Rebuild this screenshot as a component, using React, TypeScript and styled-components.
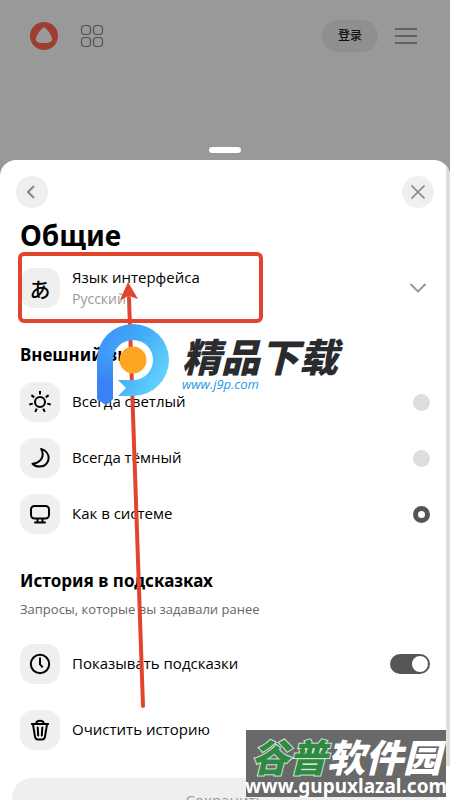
import React from "react";
import styled, { createGlobalStyle, css } from "styled-components";

const Global = createGlobalStyle`
  * { box-sizing: border-box; }
  body { margin: 0; background: #999; }
  body, button, input { font-family: "Open Sans", "Noto Sans", "Noto Sans CJK SC", sans-serif; color: #000; }
  h1, h2, p { margin: 0; padding: 0; }
`;

const Page = styled.div`
  position: relative;
  display: flex;
  flex-direction: column;
  height: 100vh;
  overflow: hidden;
  background: #999;
`;

const TopBar = styled.header`
  display: flex;
  align-items: center;
  gap: 20px;
  padding: 18px 30px 0;
  height: 54px;
`;

const IconLink = styled.a`
  display: flex;
`;

const PlainButton = styled.button`
  display: flex;
  padding: 0;
  border: 0;
  background: none;
  color: #505050;
  cursor: pointer;
`;

const Login = styled.a`
  margin-left: auto;
  margin-right: -6px;
  padding: 0 16px;
  border-radius: 16px;
  background: #8f8f8f;
  color: #111;
  font-size: 12px;
  font-weight: 500;
  line-height: 32px;
  height: 32px;
  text-decoration: none;
`;

const Handle = styled.div`
  align-self: center;
  width: 32px;
  height: 6px;
  margin: 93px 0 7px;
  border-radius: 3px;
  background: #fff;
`;

const Sheet = styled.main`
  flex: 1;
  min-height: 0;
  position: relative;
  overflow: hidden;
  padding: 16px 20px 0;
  border-radius: 16px 16px 0 0;
  background: #fff;
`;

const SheetNav = styled.nav`
  display: flex;
  justify-content: space-between;
  margin: 0 -4px;
`;

const RoundButton = styled.button`
  display: grid;
  place-items: center;
  width: 32px;
  height: 32px;
  padding: 0;
  border: 0;
  border-radius: 50%;
  background: #efefef;
  color: #858585;
`;

const Title = styled.h1`
  margin-top: 8px;
  font-family: "Noto Sans", sans-serif;
  font-size: 28px;
  line-height: 38px;
  font-weight: 700;
`;

const Heading = styled.h2`
  font-family: "Noto Sans", sans-serif;
  font-size: 17px;
  line-height: 24px;
  font-weight: 700;
`;

const Note = styled.p`
  margin-top: 4px;
  font-size: 13px;
  line-height: 24px;
  color: #666;
`;

const rowStyle = css`
  display: flex;
  align-items: center;
  gap: 12px;
  width: 100%;
  padding: 0;
  border: 0;
  background: none;
  text-align: left;
  font-size: 15px;
  line-height: 24px;
`;

const RowLabel = styled.label`${rowStyle}`;
const RowButton = styled.button<{ $top: number }>`
  ${rowStyle}
  margin-top: ${(p) => p.$top}px;
`;

const RowText = styled.span`
  flex: 1;
  padding-bottom: 2px;
`;

const RowValue = styled.span`
  display: block;
  font-size: 14px;
  line-height: 20px;
  color: #999;
`;

const Tile = styled.span`
  display: grid;
  place-items: center;
  width: 40px;
  height: 40px;
  border-radius: 14px;
  background: #efefef;
`;

const Kana = styled.span`
  font-family: "Noto Sans CJK JP", sans-serif;
  font-size: 21px;
  font-weight: 500;
  line-height: 24px;
`;

const Group = styled.section<{ $top: number }>`
  margin-top: ${(p) => p.$top}px;
`;

const Options = styled.div<{ $top: number }>`
  display: flex;
  flex-direction: column;
  gap: 16px;
  margin-top: ${(p) => p.$top}px;
`;

const Radio = styled.input`
  appearance: none;
  width: 17px;
  height: 17px;
  margin: 0;
  border-radius: 50%;
  background: #dedede;
  &:checked { background: #fff; border: 5px solid #555; }
`;

const Toggle = styled.input`
  appearance: none;
  display: flex;
  align-items: center;
  width: 40px;
  height: 20px;
  margin: 0;
  padding: 0 2px;
  border-radius: 10px;
  background: #bbb;
  &::before { content: ""; width: 16px; height: 16px; border-radius: 50%; background: #fff; }
  &:checked { background: #555; justify-content: flex-end; }
`;

const Save = styled.button`
  display: block;
  width: calc(100% + 16px);
  margin: 28px -8px 0;
  height: 44px;
  border: 0;
  border-radius: 20px;
  background: #efefef;
  color: #999;
  font-size: 15px;
`;

const ScrollThumb = styled.div`
  position: absolute;
  top: 0;
  right: 0;
  width: 4px;
  height: 606px;
  background: #dedede;
`;

const Markup = styled.svg`
  position: absolute;
  left: 0;
  top: 0;
  pointer-events: none;
`;

const Brand = styled.div`
  position: absolute;
  left: 96px;
  top: 323px;
  display: flex;
  gap: 10px;
  pointer-events: none;
`;

const BrandText = styled.div`
  display: flex;
  flex-direction: column;
  padding-top: 12px;
`;

const BrandName = styled.span`
  color: #292b2f;
  font-family: "Noto Sans CJK SC", sans-serif;
  font-size: 39px;
  font-weight: 900;
  font-style: italic;
  line-height: 40px;
  white-space: nowrap;
`;

const BrandSite = styled.span`
  color: #249be0;
  font-size: 13px;
  font-style: italic;
  font-weight: 500;
  line-height: 18px;
`;

const Stamp = styled.div`
  position: absolute;
  right: 4px;
  bottom: 3px;
  display: flex;
  flex-direction: column;
  align-items: center;
  width: 200px;
  padding: 6px 0 1px;
  background: #696969;
  color: #fff;
  pointer-events: none;
`;

const StampName = styled.div`
  font-family: "Noto Sans CJK SC", sans-serif;
  font-size: 38px;
  font-weight: 900;
  font-style: italic;
  line-height: 40px;
  white-space: nowrap;
`;

const StampAccent = styled.span`
  color: #2f8a41;
  -webkit-text-stroke: 2px #d5e5d8;
  paint-order: stroke fill;
`;

const StampSite = styled.div`
  font-family: "Noto Sans", sans-serif;
  font-size: 19px;
  font-weight: 700;
  line-height: 20px;
  white-space: nowrap;
`;

const line = { fill: "none", stroke: "currentColor", strokeWidth: 2, strokeLinecap: "round", strokeLinejoin: "round" } as const;

const Glyph = ({ children }: { children: React.ReactNode }) => (
  <svg width="24" height="24" viewBox="0 0 24 24" aria-hidden="true" {...line}>{children}</svg>
);

const SunIcon = () => (
  <Glyph>
    <circle cx="12" cy="12" r="5" />
    {[0, 1, 2, 3, 4, 5, 6].map((n) => (
      <path key={n} strokeLinecap="butt" d="M12 1v3.600" transform={`rotate(${(n * 360) / 7} 12 12)`} />
    ))}
  </Glyph>
);
const MoonIcon = () => (
  <Glyph><path d="M13.200 3C24 6 22.500 20.600 11.800 20.600c-3.100 0-5.400-1-7.300-2.900C13 16.800 17 10 13.200 3Z" /></Glyph>
);
const ScreenIcon = () => (
  <Glyph><rect x="3" y="4" width="18" height="12.500" rx="3.500" /><path d="M9.500 17v3M14.500 17v3M7 20.500h10" /></Glyph>
);
const ClockIcon = () => (
  <Glyph><circle cx="12" cy="12" r="9.200" /><path strokeLinecap="butt" d="M12 5.500v6.800l2.700 3" /></Glyph>
);
const TrashIcon = () => (
  <Glyph><path d="M3.800 6h16.400M8.200 5.800c0-4 7.600-4 7.600 0M5 6.400l2 12.200c.3 2 1 2.800 3 2.800h4c2 0 2.700-.8 3-2.800l2-12.200M9.700 9.500l.5 8M14.300 9.500l-.5 8" /></Glyph>
);

const themes = [
  { id: "light", text: "Всегда светлый", icon: <SunIcon /> },
  { id: "dark", text: "Всегда тёмный", icon: <MoonIcon /> },
  { id: "system", text: "Как в системе", icon: <ScreenIcon /> },
];

export default function App() {
  return (
    <Page>
      <Global />
      <TopBar>
        <IconLink href="#" aria-label="Алиса">
          <svg width="28" height="28" viewBox="0 0 28 28">
            <circle cx="14" cy="14" r="14" fill="#9d3e30" />
            <path fill="#999" d="M14 5.300c2 0 8.200 8.600 8.200 12.100 0 4.900-16.400 4.900-16.400 0C5.800 13.900 12 5.300 14 5.300Z" />
          </svg>
        </IconLink>
        <PlainButton aria-label="Сервисы">
          <svg width="28" height="28" viewBox="0 0 28 28" fill="none" stroke="currentColor" strokeWidth="1.200">
            {[3.500, 15.500].map((y) => [3.500, 15.500].map((x) => <rect key={`${x}-${y}`} x={x} y={y} width="9" height="9" rx="3.200" />))}
          </svg>
        </PlainButton>
        <Login href="#">登录</Login>
        <PlainButton aria-label="Меню">
          <svg width="28" height="28" viewBox="0 0 28 28" fill="none" stroke="currentColor" strokeWidth="1.500">
            <path d="M3 7h22M3 14h22M3 21h22" />
          </svg>
        </PlainButton>
      </TopBar>
      <Handle />
      <Sheet>
        <SheetNav>
          <RoundButton aria-label="Назад">
            <svg width="16" height="16" viewBox="0 0 16 16" {...line}><path strokeLinecap="butt" d="M10 2 4 8l6 6" /></svg>
          </RoundButton>
          <RoundButton aria-label="Закрыть">
            <svg width="16" height="16" viewBox="0 0 16 16" {...line} strokeWidth={1.700}><path d="m2 2 12 12M14 2 2 14" /></svg>
          </RoundButton>
        </SheetNav>
        <Title>Общие</Title>
        <RowButton $top={11}>
          <Tile><Kana aria-hidden="true">あ</Kana></Tile>
          <RowText>Язык интерфейса<RowValue>Русский</RowValue></RowText>
          <Glyph><path stroke="#999" d="m5 8.500 7 7 7-7" /></Glyph>
        </RowButton>
        <Group $top={32}>
          <Heading>Внешний вид</Heading>
          <Options $top={15} role="radiogroup" aria-label="Внешний вид">
            {themes.map((t) => (
              <RowLabel key={t.id}>
                <Tile>{t.icon}</Tile>
                <RowText>{t.text}</RowText>
                <Radio type="radio" name="theme" defaultChecked={t.id === "system"} />
              </RowLabel>
            ))}
          </Options>
        </Group>
        <Group $top={35}>
          <Heading>История в подсказках</Heading>
          <Note>Запросы, которые вы задавали ранее</Note>
          <Options $top={23}>
            <RowLabel>
              <Tile><ClockIcon /></Tile>
              <RowText>Показывать подсказки</RowText>
              <Toggle type="checkbox" role="switch" defaultChecked />
            </RowLabel>
            <RowButton $top={10}>
              <Tile><TrashIcon /></Tile>
              <RowText>Очистить историю</RowText>
            </RowButton>
          </Options>
        </Group>
        <Save>Сохранить</Save>
        <ScrollThumb />
      </Sheet>
      <Markup width="300" height="720" viewBox="0 0 300 720" fill="none" stroke="#e2442d" aria-hidden="true">
        <rect x="20" y="254" width="241" height="67" rx="4" strokeWidth="4" />
        <path strokeWidth="4" strokeLinecap="round" d="M129 298 143 706" />
        <path stroke="none" fill="#e2442d" d="m128 282 10 17-9-3-9 4Z" />
      </Markup>
      <Brand>
        <svg width="76" height="84" viewBox="0 0 76 84" aria-hidden="true">
          <defs>
            <linearGradient id="ring" x1="0" y1="0.200" x2="0.900" y2="0.800">
              <stop offset="0" stopColor="#3f93f9" /><stop offset=".45" stopColor="#42aaf8" /><stop offset="1" stopColor="#65d6fc" />
            </linearGradient>
            <linearGradient id="stem" x1="0" y1="0" x2="0" y2="1">
              <stop offset="0" stopColor="#3b82f6" stopOpacity="0" /><stop offset=".5" stopColor="#3b82f6" />
            </linearGradient>
          </defs>
          <path fill="url(#ring)" d="M1 37A36 36 0 0 1 73 37 36 36 0 0 1 37 73H22l8-8-8-8h15a20 20 0 0 0 0-40 20 20 0 0 0-20 20v39l-7 6-9-6Z" />
          <path fill="url(#stem)" d="M1 32h16.600L17 37v39l-7 6-9-6Z" />
          <circle cx="37" cy="37" r="13.500" fill="#fca624" />
        </svg>
        <BrandText>
          <BrandName>精品下载</BrandName>
          <BrandSite>www.j9p.com</BrandSite>
        </BrandText>
      </Brand>
      <Stamp>
        <StampName><StampAccent>谷普</StampAccent>软件园</StampName>
        <StampSite>www.gupuxlazal.com</StampSite>
      </Stamp>
    </Page>
  );
}
